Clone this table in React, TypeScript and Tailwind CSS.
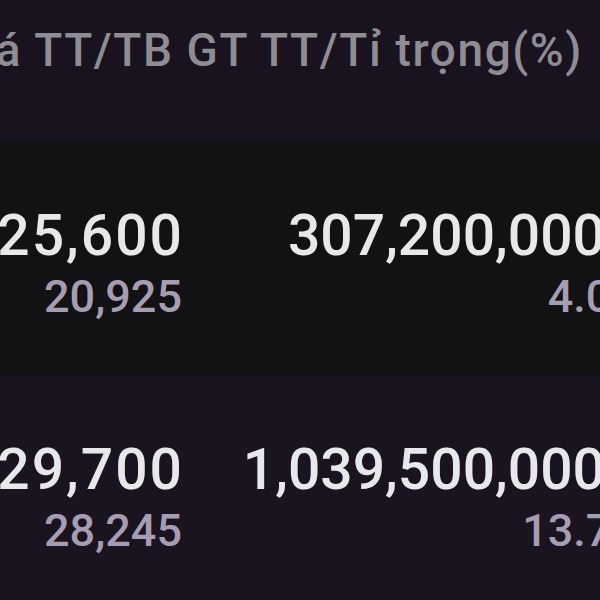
const rows = [
  { price: "25,600", avg: "20,925", value: "307,200,000", weight: "4.06", bg: "bg-[#121113]" },
  { price: "29,700", avg: "28,245", value: "1,039,500,000", weight: "13.71", bg: "bg-[#1a1320]" },
];

const App = () => {
  return (
    <main
      className="w-[600px] h-[600px] overflow-hidden bg-[#1a1320] flex flex-col"
      style={{ fontFamily: "Roboto, 'Open Sans', sans-serif" }}
    >
      <div className="h-[141px] shrink-0 bg-[#19131f] flex justify-end overflow-hidden pt-[27px] pr-[17px]">
        <h1 className="whitespace-nowrap text-[46px] leading-[46px] tracking-[1.6px] font-medium text-[#8f8c93]">
          Giá TT/TB GT TT/Tỉ trọng(%)
        </h1>
      </div>

      {rows.map((item, index) => (
        <div key={index} className={`h-[234px] shrink-0 flex pt-[66px] ${item.bg}`}>
          <div className="w-[182px] shrink-0 flex flex-col items-end">
            <span className="-mr-[2px] whitespace-nowrap text-[57px] leading-[57px] tracking-[2px] font-medium text-[#e8e7ea]">
              {item.price}
            </span>
            <span className="mt-[10px] whitespace-nowrap text-[45px] leading-[45px] font-medium text-[#a79db2]">
              {item.avg}
            </span>
          </div>
          <div className="w-[423px] shrink-0 flex flex-col items-end">
            <span className="whitespace-nowrap text-[57px] leading-[57px] font-medium text-[#e8e7ea]">
              {item.value}
            </span>
            <span className="mt-[10px] -mr-[32px] whitespace-nowrap text-[45px] leading-[45px] font-medium text-[#a79db2]">
              {item.weight}
            </span>
          </div>
        </div>
      ))}
    </main>
  );
};

export default App;
